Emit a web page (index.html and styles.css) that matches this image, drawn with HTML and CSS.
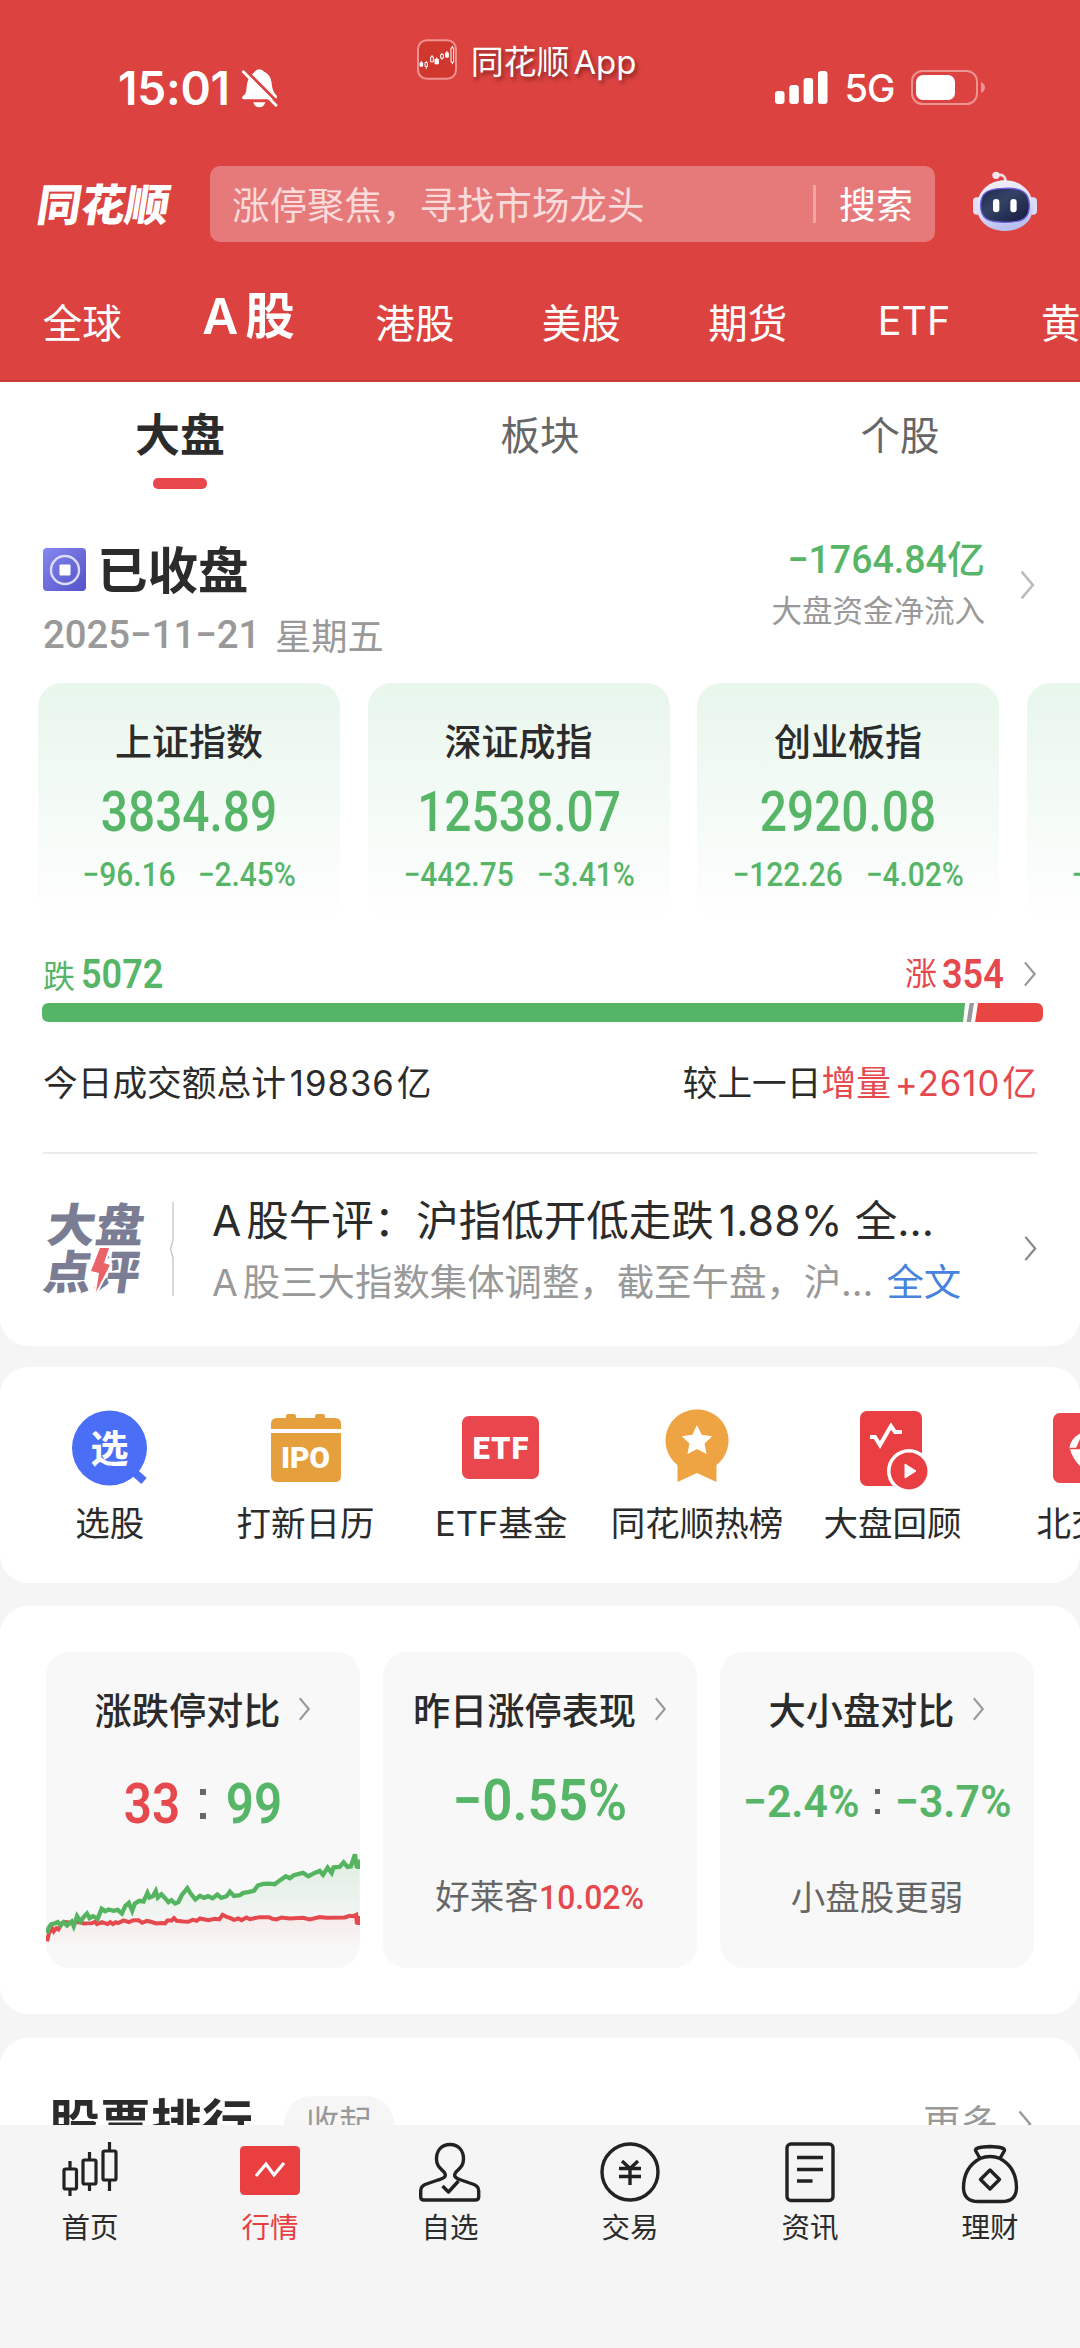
FILE: index.html
```html
<!DOCTYPE html>
<html lang="zh-CN">
<head>
<meta charset="utf-8">
<title>同花顺 行情</title>
<link rel="stylesheet" href="styles.css">
</head>
<body>
<svg class="defs" aria-hidden="true">
  <symbol id="chev" viewBox="0 0 14 28"><path d="M1.5 1.5 L12 14 L1.5 26.5" fill="none" stroke="currentColor" stroke-width="2.4"/></symbol>
</svg>

<header class="header">
  <div class="status">
    <div class="status-time">
      <span class="clock">15:01</span>
      <svg class="bell" viewBox="0 0 108 116"><path d="M0 86 Q0 82 8 76 C16 66 12 52 17 37 C22 20 34 14 38 8 Q42 0 52 0 Q62 0 66 8 C84 16 88 30 90 50 C92 68 100 74 104 80 Q107 90 98 90 H6 Q0 90 0 86Z" fill="#fff"/><path d="M34 99 H70 Q66 114 52 114 Q38 114 34 99Z" fill="#fff"/><path d="M9 1 L111 103" stroke="#dc4340" stroke-width="8"/><path d="M4 8 L102 108" stroke="#fff" stroke-width="8.500" stroke-linecap="round"/></svg>
    </div>
    <div class="app-mark">
      <svg class="app-icon" viewBox="0 0 120 122"><rect x="3" y="3" width="114" height="116" rx="27" fill="#d0382f" stroke="#ee9290" stroke-width="6"/><g fill="#fff" stroke="#fff" stroke-width="3"><path d="M9 71h8v10h-8zM54 60h10v14h-10zM86 41h8v13h-8z"/><path d="M13 66v5M59 55v5M90 36v5" /></g><g fill="none" stroke="#fff" stroke-width="3"><path d="M24 70h7v12h-7zM28 66v4M28 82v7M41 53h8v15h-8zM45 48v5M71 46h8v11h-8zM75 42v4M75 57v5M102 26h8v43h-8zM106 20v6M106 69v6"/></g></svg>
      <span>同花顺<i class="gap-s"></i>App</span>
    </div>
    <div class="status-right">
      <svg class="signal" viewBox="0 0 53 34"><g fill="#fff"><rect x="0" y="20" width="9.500" height="13" rx="3"/><rect x="14.300" y="14" width="9.500" height="19" rx="3"/><rect x="28.600" y="7" width="9.500" height="26" rx="3"/><rect x="43" y="0" width="9.500" height="33" rx="3"/></g></svg>
      <span class="net">5G</span>
      <svg class="battery" viewBox="0 0 74 36"><rect x="1" y="1" width="65" height="33" rx="10.500" fill="none" stroke="#ec9492" stroke-width="2"/><rect x="5" y="5" width="39" height="25" rx="7" fill="#fff"/><path d="M70 12 Q74 14 74 17.500 Q74 21 70 23Z" fill="#ec9492"/></svg>
    </div>
  </div>

  <div class="searchbar">
    <div class="brand">同花顺</div>
    <div class="search">
      <span class="search-hint">涨停聚焦，寻找市场龙头</span>
      <span class="search-go">搜索</span>
    </div>
    <svg class="robot" viewBox="0 0 192 180">
      <defs>
        <linearGradient id="rb" x1="0" y1="0" x2="0.300" y2="1"><stop offset="0" stop-color="#f6f1fb"/><stop offset="0.600" stop-color="#dfe0f6"/><stop offset="1" stop-color="#b9c0ee"/></linearGradient>
        <linearGradient id="rf" x1="0" y1="0" x2="1" y2="1"><stop offset="0" stop-color="#1d2a50"/><stop offset="0.400" stop-color="#344266"/><stop offset="1" stop-color="#141a3c"/></linearGradient>
      </defs>
      <path d="M72 13 Q96 6 98 32" fill="none" stroke="#f3dcea" stroke-width="8"/><circle cx="69" cy="13" r="11" fill="#f6e6f0"/>
      <rect x="0" y="79" width="26" height="52" rx="12" fill="#e3ddf5"/><rect x="166" y="79" width="26" height="52" rx="12" fill="#dcdcf6"/>
      <path d="M96 28 C140 28 180 58 180 108 C180 154 140 180 96 180 C52 180 12 154 12 108 C12 58 52 28 96 28Z" fill="url(#rb)"/>
      <path d="M96 52 C150 50 168 66 169 102 C170 144 148 154 96 154 C46 154 22 144 23 102 C24 64 44 53 96 52Z" fill="url(#rf)" stroke="#6d5fdc" stroke-width="4"/>
      <rect x="60" y="84" width="19" height="40" rx="9" fill="#fff"/><rect x="112" y="84" width="19" height="40" rx="9" fill="#fff"/>
    </svg>
  </div>

  <nav class="markets">
    <span>全球</span><span class="on">A<i class="gap-m"></i>股</span><span>港股</span><span>美股</span><span>期货</span><span class="etf">ETF</span><span>黄金</span>
  </nav>
</header>

<main class="content">
  <section class="panel overview">
    <nav class="subtabs"><span class="on">大盘</span><span>板块</span><span>个股</span></nav>

    <div class="session">
      <div class="session-l">
        <div class="session-title">
          <svg viewBox="0 0 43 43"><defs><linearGradient id="pg" x1="0" y1="0" x2="1" y2="1"><stop offset="0" stop-color="#8687ee"/><stop offset="1" stop-color="#5452c8"/></linearGradient></defs><rect width="43" height="43" rx="4" fill="url(#pg)"/><circle cx="22" cy="22" r="14" fill="none" stroke="#dcdcfa" stroke-width="2.400"/><rect x="16.500" y="16.500" width="11" height="11" rx="1" fill="#fff"/></svg>
          <span>已收盘</span>
        </div>
        <div class="session-date"><span class="num date-num">2025−11−21</span><span>星期五</span></div>
      </div>
      <div class="session-r">
        <div class="flow"><span class="num">−1764.84</span>亿</div>
        <div class="flow-label">大盘资金净流入</div>
      </div>
      <svg class="session-chev"><use href="#chev"/></svg>
    </div>

    <div class="indices">
      <article class="index"><h3>上证指数</h3><b class="num">3834.89</b><p><span class="num">−96.16</span><span class="num">−2.45%</span></p></article>
      <article class="index"><h3>深证成指</h3><b class="num">12538.07</b><p><span class="num">−442.75</span><span class="num">−3.41%</span></p></article>
      <article class="index"><h3>创业板指</h3><b class="num">2920.08</b><p><span class="num">−122.26</span><span class="num">−4.02%</span></p></article>
      <article class="index cut"><p><span class="num">−</span></p></article>
    </div>

    <div class="breadth">
      <div class="down">跌<span class="num">5072</span></div>
      <div class="up">涨<span class="num">354</span><svg><use href="#chev"/></svg></div>
    </div>
    <svg class="ratio" viewBox="0 0 1002 19"><path d="M7 0 H924 L922 19 H7 Q0 19 0 12 V7 Q0 0 7 0Z" fill="#54b567"/><path d="M928.500 0 h4.500 l-3 19 h-4.500z" fill="#999"/><path d="M937 0 H995 Q1002 0 1002 7 V12 Q1002 19 995 19 H934Z" fill="#e94643"/></svg>

    <div class="turnover">
      <span>今日成交额总计<i class="gap-s"></i><span class="lat">19836</span><i class="gap-t"></i>亿</span>
      <span>较上一日<em>增量<i class="gap-s"></i><span class="lat">+2610</span><i class="gap-t"></i>亿</em></span>
    </div>

    <div class="news">
      <svg class="news-logo" viewBox="0 0 101 91">
        <g transform="skewX(-8)" font-family="'Noto Sans CJK SC'" font-weight="900" font-size="46" fill="#7b7d94">
          <text x="8" y="41" textLength="97" lengthAdjust="spacingAndGlyphs">大盘</text>
          <text x="11" y="88" textLength="96" lengthAdjust="spacingAndGlyphs">点评</text>
        </g>
        <path d="M57 47 H66 L61 62 L67 64 L53 91 L56 72 L48 70Z" fill="#fff" stroke="#fff" stroke-width="4"/>
        <path d="M57 47 H66 L61 62 L67 64 L53 91 L56 72 L48 70Z" fill="#ea6368"/>
      </svg>
      <svg class="news-rule" viewBox="0 0 6 94"><path d="M4 0 V38 L1.500 47 L4 56 V94" fill="none" stroke="#c4c4c4" stroke-width="1.300"/></svg>
      <div class="news-text">
        <div class="news-title">A<i class="gap-l"></i>股午评：沪指低开低走跌<i class="gap-l"></i><span class="pct">1.88%</span> 全…</div>
        <div class="news-sub">A<i class="gap-l"></i>股三大指数集体调整，截至午盘，沪…<a>全文</a></div>
      </div>
      <svg class="news-chev"><use href="#chev"/></svg>
    </div>
  </section>

  <section class="panel quick">
    <div class="q"><svg viewBox="0 0 86 86"><path d="M66 66 L77 76" stroke="#4a6ef5" stroke-width="8"/><circle cx="42.500" cy="43" r="37.500" fill="#4a6ef5"/><text x="42.500" y="57" text-anchor="middle" font-family="'Noto Sans CJK SC'" font-weight="700" font-size="38" fill="#fff">选</text></svg><span>选股</span></div>
    <div class="q"><svg viewBox="0 0 86 86"><path d="M8 24 V19 Q8 13 14 13 H23 V11 Q23 9 25 9 H31 Q33 9 33 11 V13 H52 V11 Q52 9 54 9 H60 Q62 9 62 11 V13 H72 Q78 13 78 19 V24Z M8 28 H78 V71 Q78 77 72 77 H14 Q8 77 8 71Z" fill="#e69f3d"/><text x="18" y="63" textLength="49" font-family="Roboto" font-weight="900" font-size="30" fill="#fff">IPO</text></svg><span>打新日历</span></div>
    <div class="q"><svg viewBox="0 0 86 86"><rect x="4" y="11" width="77" height="63" rx="7" fill="#e9474d"/><text x="14.500" y="53.500" textLength="56" font-family="Roboto" font-weight="900" font-size="31" fill="#fff">ETF</text></svg><span>ETF基金</span></div>
    <div class="q"><svg viewBox="0 0 86 86"><path d="M43 4.500 A31 31 0 0 1 62.500 60 V77 L43 68 L23.500 77 V60 A31 31 0 0 1 43 4.500Z" fill="#eea442"/><path d="M43 20 l4.700 9.800 10.500 1.400 -7.600 7.300 1.900 10.600 -9.500 -5.100 -9.500 5.100 1.900 -10.600 -7.600 -7.300 10.500 -1.400z" fill="#fff"/></svg><span>同花顺热榜</span></div>
    <div class="q"><svg viewBox="0 0 86 86"><rect x="10" y="6" width="62" height="75" rx="7" fill="#e93f42"/><path d="M20 32 H25 L30 40 L41 21 L45 27 H52" fill="none" stroke="#fff" stroke-width="4"/><circle cx="59" cy="66" r="22" fill="#fff"/><circle cx="59" cy="66" r="18.500" fill="#e93f42"/><path d="M55 59 L66 66 L55 73Z" fill="#fff" stroke="#fff" stroke-linejoin="round"/></svg><span>大盘回顾</span></div>
    <div class="q"><svg viewBox="0 0 86 86"><rect x="8" y="8" width="71" height="70" rx="7" fill="#e9474d"/><path d="M36 28 Q25 34 24.500 43 Q28 55 36 62Z" fill="#fff"/><path d="M24.500 43.500 H36" stroke="#e9474d" stroke-width="1.500"/><path d="M31 43 L35 34 V43Z" fill="#e9474d"/></svg><span>北交所</span></div>
  </section>

  <section class="panel stats">
    <article class="stat">
      <h4>涨跌停对比<svg><use href="#chev"/></svg></h4>
      <div class="pair"><span class="num red">33</span><i class="colon"></i><span class="num">99</span></div>
      <svg class="spark" viewBox="48 200 942 364">
        <defs>
          <linearGradient id="gg" x1="0" y1="0" x2="0" y2="1"><stop offset="0" stop-color="#55b469" stop-opacity="0.150"/><stop offset="1" stop-color="#55b469" stop-opacity="0.020"/></linearGradient>
          <linearGradient id="rg" x1="0" y1="0" x2="0" y2="1"><stop offset="0" stop-color="#e5484d" stop-opacity="0.080"/><stop offset="1" stop-color="#e5484d" stop-opacity="0"/></linearGradient>
        </defs>
        <path d="M140 418 L215 395 L270 390 L295 372 L350 345 L430 362 L470 330 L500 352 L620 342 L700 310 L780 290 L880 275 L960 250 L990 245 V412 L148 428Z" fill="url(#gg)"/>
        <path d="M50 480 L95 430 L570 415 L990 412 V505 H50Z" fill="url(#rg)"/>
        <path d="M50 484 L56 458 L66 446 L70 454 L78 444 L84 448 L96 428 L106 426 L120 428 L150 426 L160 430 L185 429 L195 425 L200 432 L215 426 L232 432 L240 426 L248 432 L256 426 L264 429 L280 421 L296 426 L310 420 L325 420 L336 428 L350 422 L362 425 L378 430 L395 429 L405 430 L412 421 L425 421 L432 414 L440 422 L460 424 L475 425 L488 419 L500 422 L510 415 L535 420 L555 416 L568 418 L578 404 L590 410 L602 414 L612 419 L625 415 L635 420 L650 412 L660 417 L690 411 L718 411 L728 416 L740 418 L755 412 L780 415 L820 413 L840 418 L870 411 L890 413 L945 412 L960 407 L972 408 L980 404 L982 432 L986 408 V435" fill="none" stroke="#e5484d" stroke-width="12"/>
        <path d="M50 460 L55 443 L62 433 L72 430 L82 426 L90 435 L100 426 L110 436 L124 424 L130 438 L140 408 L150 424 L162 408 L170 400 L178 414 L188 408 L202 416 L214 386 L225 393 L235 388 L250 392 L262 389 L275 400 L285 378 L296 368 L306 392 L314 370 L328 362 L340 364 L352 338 L358 352 L368 348 L377 332 L383 352 L394 342 L405 354 L415 366 L424 360 L435 370 L445 366 L455 345 L472 324 L482 340 L496 358 L510 347 L522 353 L534 348 L548 354 L562 343 L574 353 L590 348 L600 334 L612 347 L630 345 L640 338 L655 336 L672 332 L684 316 L700 311 L718 310 L735 312 L748 302 L768 288 L780 294 L792 285 L820 278 L836 288 L855 278 L870 272 L880 284 L894 262 L906 278 L912 261 L930 260 L942 246 L954 260 L964 258 L976 222 L982 262 L986 238 V266" fill="none" stroke="#55b45f" stroke-width="13"/>
      </svg>
    </article>
    <article class="stat">
      <h4>昨日涨停表现<svg><use href="#chev"/></svg></h4>
      <div class="single"><span class="num">−0.55%</span></div>
      <p>好莱客<span class="num red">10.02%</span></p>
    </article>
    <article class="stat">
      <h4>大小盘对比<svg><use href="#chev"/></svg></h4>
      <div class="pair small"><span class="num">−2.4%</span><i class="colon"></i><span class="num">−3.7%</span></div>
      <p>小盘股更弱</p>
    </article>
  </section>

  <section class="panel rank">
    <h2>股票排行</h2><span class="pill">收起</span>
    <span class="more">更多<svg><use href="#chev"/></svg></span>
  </section>
</main>

<footer class="tabbar">
  <div class="t"><svg viewBox="0 0 64 64"><g fill="none" stroke="#222" stroke-width="3.200"><rect x="6" y="27" width="12.500" height="20" rx="1.500"/><path d="M12 19v8M12 47v7"/><rect x="25" y="18" width="13" height="24" rx="1.500"/><path d="M31.500 10v8M31.500 42v7"/><rect x="45" y="9" width="13" height="29" rx="1.500"/><path d="M51.500 0v9M51.500 38v11"/></g></svg><span>首页</span></div>
  <div class="t on"><svg viewBox="0 0 64 64"><rect x="2" y="4" width="60" height="49" rx="4.500" fill="#ea3f41"/><path d="M18 34 L28 22 L36 33 L46 21" fill="none" stroke="#fff" stroke-width="3.200"/></svg><span>行情</span></div>
  <div class="t"><svg viewBox="0 0 64 64"><g fill="none" stroke="#222" stroke-width="3.400" stroke-linejoin="round"><path d="M32 2.500 C23 2.500 18.500 9 18.500 17 C18.500 24 22 26 26 30 C29 34 27 36 20 38 L7 42.500 Q2.700 44.500 2.700 49 V55 Q2.700 58 6 58 H57 Q60.700 58 60.700 55 V49 Q60.700 44.500 56 42.500 L43 38 C37 36 35 34 38 30 C42 26 45.500 24 45.500 17 C45.500 9 41 2.500 32 2.500Z"/><path d="M24.500 44 L30.500 50 L40.500 39"/></g></svg><span>自选</span></div>
  <div class="t"><svg viewBox="0 0 64 64"><g fill="none" stroke="#222" stroke-width="3.400"><circle cx="32" cy="30" r="28"/><path d="M24 19 L32 26.500 L40 19 M32 26 V43 M21 26.500 H43 M21 34.500 H43"/></g></svg><span>交易</span></div>
  <div class="t"><svg viewBox="0 0 64 64"><g fill="none" stroke="#222" stroke-width="3.400"><rect x="9" y="2" width="46" height="56.500" rx="4"/><path d="M19 15.500 H45 M19 27.500 H45 M19 39 H34.500"/></g></svg><span>资讯</span></div>
  <div class="t"><svg viewBox="0 0 64 64"><g fill="none" stroke="#222" stroke-width="3.400" stroke-linejoin="round"><path d="M22 16.500 L17.500 8.500 Q17 5 32 4.500 Q47 5 46.500 8.500 L42 16.500 Q32 12.500 22 16.500Z"/><path d="M22 16.500 C12 22 5.500 32 5.500 46 Q6 59.500 20 59.500 H44 Q58 59.500 58.500 46 C58.500 32 52 22 42 16.500"/><path d="M32 28 L41.500 37.500 L32 47 L22.500 37.500Z"/></g></svg><span>理财</span></div>
</footer>
</body>
</html>
```
FILE: styles.css
```css
* { box-sizing: border-box; margin: 0; padding: 0; }
html, body { width: 1080px; height: 2348px; overflow: hidden; }
body {
  display: flex; flex-direction: column;
  background: #f5f5f5; color: #2b2b2b;
  font-family: Inter, "Noto Sans CJK SC", sans-serif;
}
span, div, p, h2, h3, h4 { white-space: nowrap; }
svg { display: block; flex: none; overflow: visible; }
i, em { font-style: normal; }
.defs { position: absolute; width: 0; height: 0; }
.gap-s { display: inline-block; width: 4px; }
.gap-t { display: inline-block; width: 2px; }
.gap-m { display: inline-block; width: 7px; }
.gap-l { display: inline-block; width: 5px; }
.lat { letter-spacing: 1px; }
.num { display: inline-block; font-family: Roboto, sans-serif; font-weight: 500; transform: scaleX(.88); color: #57b568; }
.num.red { color: #e5484d; }

/* header */
.header { flex: none; height: 382px; background: #dc4340; color: #fff; border-bottom: 2px solid #c63c3b; overflow: hidden; }
.status { display: flex; align-items: center; justify-content: space-between; height: 148px; padding: 28px 95px 0 118px; }
.status-time { display: flex; align-items: center; width: 160px; justify-content: space-between; }
.clock { font-size: 46px; font-weight: 600; letter-spacing: -.2px; }
.bell { width: 36px; height: 39px; }
.app-mark { display: flex; align-items: center; gap: 14px; margin-top: -57px; font-size: 33px; letter-spacing: -.1px; text-shadow: 2px 3px 4px rgba(90,20,20,.7); }
.app-icon { width: 40px; height: 41px; }
.status-right { display: flex; align-items: center; width: 210px; justify-content: space-between; }
.signal { width: 53px; height: 34px; }
.net { font-size: 38px; font-weight: 450; letter-spacing: -1px; }
.battery { width: 74px; height: 36px; }

.searchbar { display: flex; align-items: center; height: 112px; padding-left: 38px; }
.brand { width: 133px; font-size: 44px; font-weight: 900; line-height: 62px; padding-top: 2px; transform: skewX(-9deg); }
.search { display: flex; align-items: center; justify-content: space-between; width: 725px; height: 76px; margin-left: 39px; padding: 0 22px; border-radius: 10px; background: #e67a7a; }
.search-hint { font-size: 37.500px; line-height: 76px; margin-top: 3px; color: #fadada; }
.search-go { height: 38px; padding-left: 23px; border-left: 3px solid #f0a4a4; font-size: 37px; line-height: 41px; }
.robot { width: 64px; height: 60px; margin: -6px 0 0 38px; }

.markets { display: flex; height: 120px; margin-left: -1px; align-items: center; font-size: 39.500px; }
.markets span { flex: 0 0 166.400px; text-align: center; }
.markets .on { font-size: 49.500px; font-weight: 600; padding-bottom: 15px; }
.markets .etf { padding-top: 2px; }

/* market overview */
.content { flex: 1; overflow: hidden; }
.panel { background: #fff; border-radius: 28px; }
.overview { height: 964px; border-radius: 0 0 28px 28px; }
.subtabs { display: flex; height: 112px; }
.subtabs span { flex: 1; text-align: center; font-size: 39.500px; line-height: 108px; color: #666; }
.subtabs .on { display: flex; flex-direction: column; align-items: center; font-size: 45px; font-weight: 600; color: #2b2b2b; }
.subtabs .on::after { content: ""; width: 54px; height: 11px; margin-top: -12px; border-radius: 5px; background: #e8484c; }

.session { display: flex; height: 189px; padding: 46px 44px 0 43px; }
.session-title { display: flex; align-items: center; gap: 11px; height: 60px; font-size: 50.500px; font-weight: 600; }
.session-title span { margin-top: -6px; }
.session-title svg { width: 43px; height: 43px; margin-top: -1px; }
.session-date { display: flex; align-items: center; height: 60px; margin-top: 4px; font-size: 36.300px; color: #999; }
.session-date .date-num { width: 232px; font-size: 39.500px; transform: scaleX(.97); transform-origin: left; color: #999; font-weight: 500; }
.session-r { margin-left: auto; text-align: right; }
.flow { height: 40px; line-height: 38px; font-size: 38px; color: #57b568; font-weight: 500; }
.flow .num { font-size: 39.500px; transform: scaleX(.95); transform-origin: right; }
.flow-label { margin-top: 13px; font-size: 30.500px; line-height: 36px; color: #999; }
.session-chev { width: 17px; height: 30px; margin: 30px 0 0 34px; color: #bbb; }

.indices { display: flex; gap: 27.500px; height: 242px; padding-left: 38px; overflow: hidden; }
.index { flex: 0 0 302px; height: 242px; padding-top: 35px; border-radius: 24px; text-align: center; background: linear-gradient(#e8f6ec, #f5fbf7 55%, #fff); }
.index h3 { font-size: 37px; line-height: 50px; font-weight: 500; }
.index b { display: block; margin-top: 14px; font-size: 55px; line-height: 60px; transform: scaleX(.87); }
.index p { display: flex; justify-content: center; gap: 9px; margin-top: 10px; font-size: 34px; line-height: 44px; }
.index.cut p { justify-content: flex-start; padding: 124px 0 0 43px; }

.breadth { display: flex; justify-content: space-between; height: 78px; padding: 20px 43px 0; line-height: 58px; font-size: 32px; color: #57b568; }
.breadth .num { margin-left: 6px; font-size: 41px; font-weight: 600; transform-origin: left; }
.up { display: flex; color: #e5484d; }
.up .num { color: #e5484d; width: 66px; margin-left: 5px; }
.up svg { width: 14px; height: 26px; margin: 16px 0 0 15px; color: #999; }
.ratio { width: 1001px; height: 19px; margin-left: 42px; }
.turnover { display: flex; justify-content: space-between; margin: 0 43px; height: 132px; line-height: 122px; font-size: 34.700px; border-bottom: 2px solid #ebebeb; }
.turnover em { color: #e5484d; }

.news { display: flex; padding: 0 43px; height: 191px; }
.news-logo { width: 101px; height: 91px; margin-top: 47px; }
.news-rule { width: 6px; height: 94px; margin: 48px 0 0 25px; }
.news-text { margin-left: 37px; }
.news-title { margin-top: 43px; font-size: 42.500px; line-height: 48px; }
.pct { letter-spacing: .2px; }
.news-sub { margin-top: 16px; font-size: 37.400px; line-height: 44px; color: #999; }
.news-sub a { margin-left: 13px; color: #4783dc; }
.news-chev { width: 13px; height: 27px; margin: 81px 0 0 auto; color: #888; }

/* shortcuts */
.quick { display: flex; height: 216px; margin-top: 21px; padding: 38px 0 0 12px; overflow: hidden; }
.q { flex: 0 0 195.700px; display: flex; flex-direction: column; align-items: center; }
.q svg { width: 86px; height: 86px; }
.q span { margin-top: 11px; font-size: 34.500px; line-height: 44px; }

/* comparison cards */
.stats { display: flex; gap: 23px; height: 408px; margin-top: 23px; padding: 46px; }
.stat { flex: 0 0 314px; height: 316px; padding-top: 32px; display: flex; flex-direction: column; align-items: center; border-radius: 24px; background: #f8f8f8; overflow: hidden; }
.stat h4 { display: flex; align-items: center; gap: 18px; height: 50px; font-size: 37.200px; font-weight: 500; }
.stat h4 svg { width: 13px; height: 24px; color: #999; }
.pair, .single { display: flex; align-items: center; justify-content: center; height: 60px; margin-top: 40px; font-size: 56px; }
.pair .num, .single .num { font-weight: 600; }
.single { margin-top: 36px; font-size: 57px; }
.single .num { transform: scaleX(.93); }
.pair.small { margin-top: 37px; font-size: 45px; }
.pair.small .num { transform: scaleX(.95); }
.colon { flex: none; width: 6px; height: 30px; margin: 0 16px; border: solid #666; border-width: 6px 0; }
.small .colon { margin: 0 12px; height: 25px; width: 5px; border-width: 5px 0; }
.stat p { margin-top: 45px; line-height: 44px; font-size: 34.500px; color: #666; }
.stat p .num { font-size: 34px; transform: scaleX(.94); transform-origin: left; margin-right: -6px; }
.spark { width: 314px; height: 121px; margin-top: auto; }

/* ranking */
.rank { display: flex; align-items: center; height: 200px; margin-top: 24px; padding: 0 48px 28px 49px; }
.rank h2 { font-size: 51px; font-weight: 700; line-height: 60px; }
.pill { margin-left: 31px; width: 110px; height: 56px; border-radius: 28px; background: #f6f6f6; text-align: center; font-size: 33px; line-height: 52px; color: #999; }
.more { display: flex; align-items: center; gap: 20px; margin-left: auto; font-size: 37.500px; line-height: 56px; color: #999; }
.more svg { width: 14px; height: 28px; }

/* tab bar */
.tabbar { flex: none; display: flex; height: 223px; background: #f5f5f5; padding-top: 17px; }
.t { flex: 1; display: flex; flex-direction: column; align-items: center; font-size: 28.500px; }
.t svg { width: 64px; height: 64px; }
.t span { line-height: 40px; margin-top: 2px; }
.t.on { color: #ea3f41; }
```
